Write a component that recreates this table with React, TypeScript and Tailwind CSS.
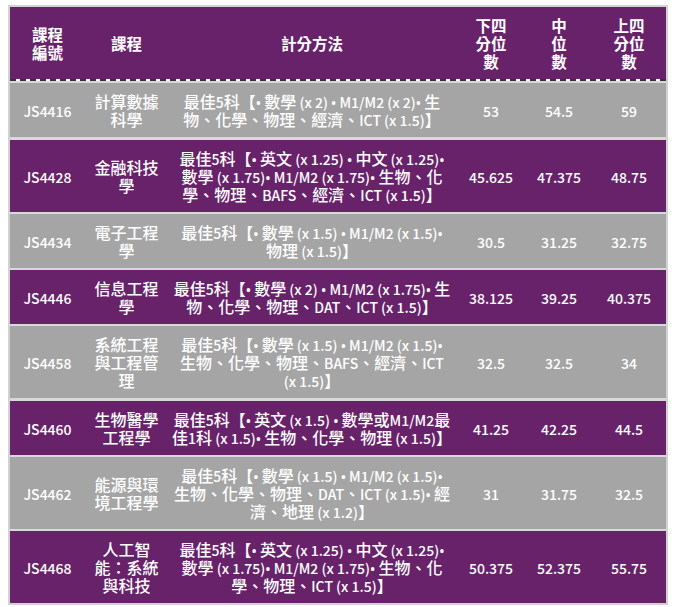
const rows = [
  {
    code: "JS4416",
    name: "計算數據科學",
    method: ["最佳5科【• 數學 (x 2) • M1/M2 (x 2)• 生", "物、化學、物理、經濟、ICT (x 1.5)】"],
    lq: "53",
    mid: "54.5",
    uq: "59",
  },
  {
    code: "JS4428",
    name: "金融科技學",
    method: [
      "最佳5科【• 英文 (x 1.25) • 中文 (x 1.25)•",
      "數學 (x 1.75)• M1/M2 (x 1.75)• 生物、化",
      "學、物理、BAFS、經濟、ICT (x 1.5)】",
    ],
    lq: "45.625",
    mid: "47.375",
    uq: "48.75",
  },
  {
    code: "JS4434",
    name: "電子工程學",
    method: ["最佳5科【• 數學 (x 1.5) • M1/M2 (x 1.5)•", "物理 (x 1.5)】"],
    lq: "30.5",
    mid: "31.25",
    uq: "32.75",
  },
  {
    code: "JS4446",
    name: "信息工程學",
    method: ["最佳5科【• 數學 (x 2) • M1/M2 (x 1.75)• 生", "物、化學、物理、DAT、ICT (x 1.5)】"],
    lq: "38.125",
    mid: "39.25",
    uq: "40.375",
  },
  {
    code: "JS4458",
    name: "系統工程與工程管理",
    method: ["最佳5科【• 數學 (x 1.5) • M1/M2 (x 1.5)•", "生物、化學、物理、BAFS、經濟、ICT", "(x 1.5)】"],
    lq: "32.5",
    mid: "32.5",
    uq: "34",
  },
  {
    code: "JS4460",
    name: "生物醫學工程學",
    method: ["最佳5科【• 英文 (x 1.5) • 數學或M1/M2最", "佳1科 (x 1.5)• 生物、化學、物理 (x 1.5)】"],
    lq: "41.25",
    mid: "42.25",
    uq: "44.5",
  },
  {
    code: "JS4462",
    name: "能源與環境工程學",
    method: [
      "最佳5科【• 數學 (x 1.5) • M1/M2 (x 1.5)•",
      "生物、化學、物理、DAT、ICT (x 1.5)• 經",
      "濟、地理 (x 1.2)】",
    ],
    lq: "31",
    mid: "31.75",
    uq: "32.5",
  },
  {
    code: "JS4468",
    name: "人工智能：系統與科技",
    method: [
      "最佳5科【• 英文 (x 1.25) • 中文 (x 1.25)•",
      "數學 (x 1.75)• M1/M2 (x 1.75)• 生物、化",
      "學、物理、ICT (x 1.5)】",
    ],
    lq: "50.375",
    mid: "52.375",
    uq: "55.75",
  },
];

const cols = "grid grid-cols-[75px_83px_288px_70px_66px_74px]";
const cell = "flex items-center justify-center px-2 py-[9px] text-center";

const CJK = /([\u2E80-\u9FFF\u3000-\u303F\uFF00-\uFFEF]+)/;

// Chinese is set a little larger than the Latin runs (the source page pairs a
// narrow Latin face with a CJK fallback); the bullet comes from a Latin font.
function Mixed({ text }: { text: string }) {
  return (
    <>
      {text.split(CJK).map((run, i) => {
        if (!run) return null;
        if (i % 2 === 1) return <span key={i}>{run}</span>;
        return (
          <span key={i} className="text-[14px] leading-none">
            {run.split("•").map((p, j) => (
              <span key={j}>
                {j > 0 && <span className="font-['Noto_Sans',sans-serif] leading-none">•</span>}
                {p}
              </span>
            ))}
          </span>
        );
      })}
    </>
  );
}

export default function App() {
  return (
    <div className="min-h-screen bg-white pl-[8px] pt-[5px] font-['Noto_Sans_CJK_TC','Noto_Sans',sans-serif] text-[16px] leading-[18px] text-white">
      <div className="flex w-[660px] flex-col gap-[2.3px] border-2 border-[#d2d2d2] bg-[#d9d9d9]">
        <div className="border-b-2 border-dashed border-[#333333] bg-white">
          <div className={`${cols} bg-[#68226a] text-[15.5px] font-bold`}>
            <div className={cell}>
              課程
              <br />
              編號
            </div>
            <div className={cell}>課程</div>
            <div className={cell}>計分方法</div>
            <div className={cell}>
              下四
              <br />
              分位
              <br />
              數
            </div>
            <div className={cell}>
              中
              <br />
              位
              <br />
              數
            </div>
            <div className={cell}>
              上四
              <br />
              分位
              <br />
              數
            </div>
          </div>
        </div>

        {rows.map((r, i) => (
          <div
            key={r.code}
            className={`${cols} font-medium ${i % 2 === 0 ? "bg-[#a5a5a5]" : "bg-[#68226a]"}`}
          >
            <div className={cell}>
              <span>
                <Mixed text={r.code} />
              </span>
            </div>
            <div className={cell}>
              <span>
                <Mixed text={r.name} />
              </span>
            </div>
            <div className="flex flex-col items-center justify-center px-[2px] py-[9px] text-center">
              {r.method.map((line) => (
                <div key={line} className="whitespace-nowrap">
                  <Mixed text={line} />
                </div>
              ))}
            </div>
            <div className={cell}>
              <span>
                <Mixed text={r.lq} />
              </span>
            </div>
            <div className={cell}>
              <span>
                <Mixed text={r.mid} />
              </span>
            </div>
            <div className={cell}>
              <span>
                <Mixed text={r.uq} />
              </span>
            </div>
          </div>
        ))}
      </div>
    </div>
  );
}
